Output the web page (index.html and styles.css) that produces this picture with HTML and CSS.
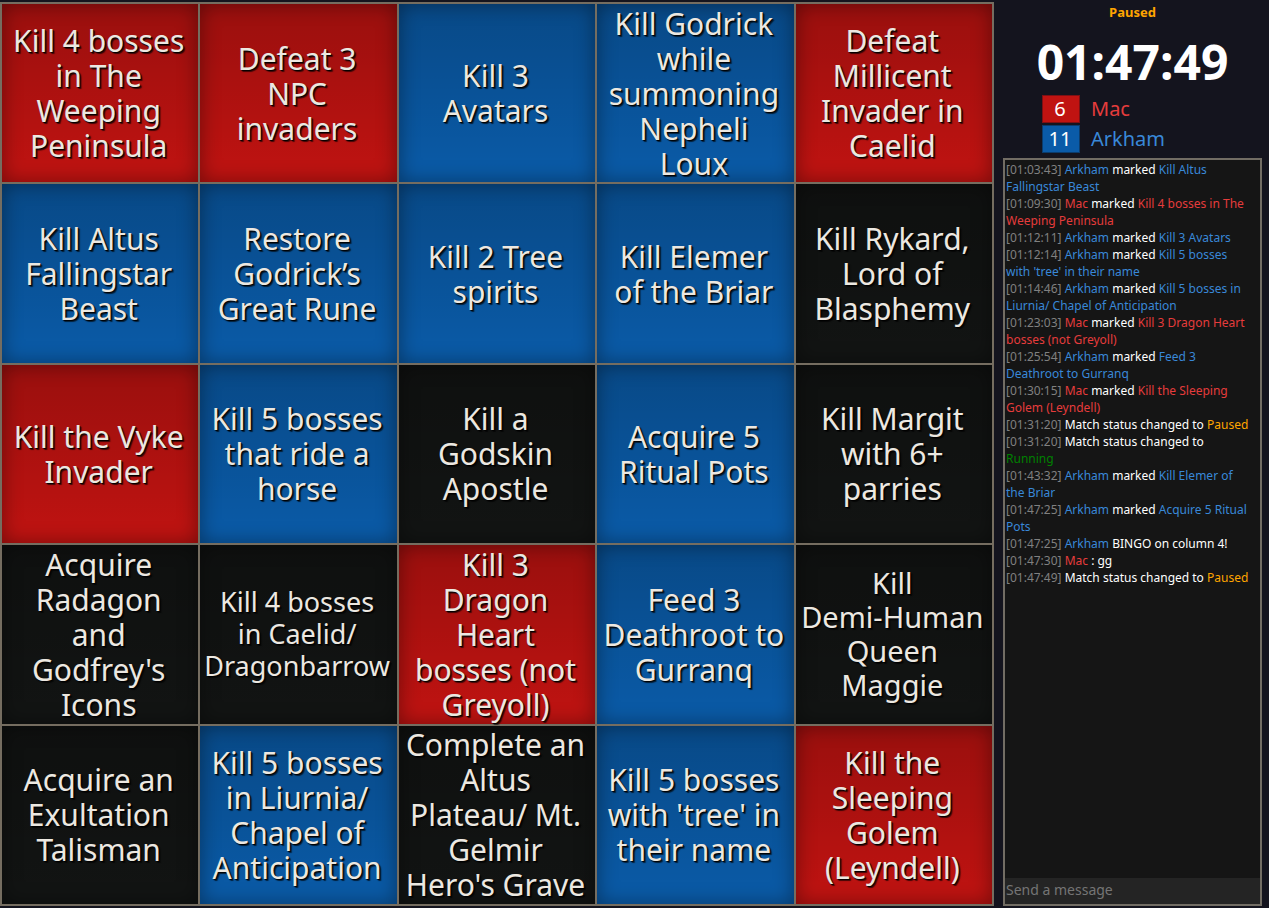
FILE: index.html
```html
<!DOCTYPE html>
<html lang="en">
<head>
<meta charset="utf-8">
<title>Bingo match</title>
<link rel="stylesheet" href="styles.css">
</head>
<body>
<main class="board">
  <button class="cell red">Kill 4 bosses<br>in The<br>Weeping<br>Peninsula</button>
  <button class="cell red">Defeat 3<br>NPC<br>invaders</button>
  <button class="cell blue">Kill 3<br>Avatars</button>
  <button class="cell blue">Kill Godrick<br>while<br>summoning<br>Nepheli<br>Loux</button>
  <button class="cell red">Defeat<br>Millicent<br>Invader in<br>Caelid</button>

  <button class="cell blue">Kill Altus<br>Fallingstar<br>Beast</button>
  <button class="cell blue">Restore<br>Godrick’s<br>Great Rune</button>
  <button class="cell blue">Kill 2 Tree<br>spirits</button>
  <button class="cell blue">Kill Elemer<br>of the Briar</button>
  <button class="cell">Kill Rykard,<br>Lord of<br>Blasphemy</button>

  <button class="cell red">Kill the Vyke<br>Invader</button>
  <button class="cell blue">Kill 5 bosses<br>that ride a<br>horse</button>
  <button class="cell">Kill a<br>Godskin<br>Apostle</button>
  <button class="cell blue">Acquire 5<br>Ritual Pots</button>
  <button class="cell">Kill Margit<br>with 6+<br>parries</button>

  <button class="cell">Acquire<br>Radagon<br>and<br>Godfrey's<br>Icons</button>
  <button class="cell small">Kill 4 bosses<br>in Caelid/<br>Dragonbarrow</button>
  <button class="cell red">Kill 3<br>Dragon<br>Heart<br>bosses (not<br>Greyoll)</button>
  <button class="cell blue">Feed 3<br>Deathroot to<br>Gurranq</button>
  <button class="cell medium">Kill<br>Demi-Human<br>Queen<br>Maggie</button>

  <button class="cell">Acquire an<br>Exultation<br>Talisman</button>
  <button class="cell blue">Kill 5 bosses<br>in Liurnia/<br>Chapel of<br>Anticipation</button>
  <button class="cell">Complete an<br>Altus<br>Plateau/ Mt.<br>Gelmir<br>Hero's Grave</button>
  <button class="cell blue">Kill 5 bosses<br>with 'tree' in<br>their name</button>
  <button class="cell red">Kill the<br>Sleeping<br>Golem<br>(Leyndell)</button>
</main>

<aside class="side">
  <div class="status">Paused</div>
  <div class="timer">01:47:49</div>
  <div class="teams">
    <div class="team"><span class="score score-red">6</span><span class="t-red">Mac</span></div>
    <div class="team"><span class="score score-blue">11</span><span class="t-blue">Arkham</span></div>
  </div>
  <section class="chat">
    <div class="log">
      <p><time>[01:03:43]</time> <span class="t-blue">Arkham</span> marked <span class="t-blue">Kill Altus<br>Fallingstar Beast</span></p>
      <p><time>[01:09:30]</time> <span class="t-red">Mac</span> marked <span class="t-red">Kill 4 bosses in The<br>Weeping Peninsula</span></p>
      <p><time>[01:12:11]</time> <span class="t-blue">Arkham</span> marked <span class="t-blue">Kill 3 Avatars</span></p>
      <p><time>[01:12:14]</time> <span class="t-blue">Arkham</span> marked <span class="t-blue">Kill 5 bosses<br>with 'tree' in their name</span></p>
      <p><time>[01:14:46]</time> <span class="t-blue">Arkham</span> marked <span class="t-blue">Kill 5 bosses in<br>Liurnia/ Chapel of Anticipation</span></p>
      <p><time>[01:23:03]</time> <span class="t-red">Mac</span> marked <span class="t-red">Kill 3 Dragon Heart<br>bosses (not Greyoll)</span></p>
      <p><time>[01:25:54]</time> <span class="t-blue">Arkham</span> marked <span class="t-blue">Feed 3<br>Deathroot to Gurranq</span></p>
      <p><time>[01:30:15]</time> <span class="t-red">Mac</span> marked <span class="t-red">Kill the Sleeping<br>Golem (Leyndell)</span></p>
      <p><time>[01:31:20]</time> Match status changed to <span class="t-orange">Paused</span></p>
      <p><time>[01:31:20]</time> Match status changed to<br><span class="t-green">Running</span></p>
      <p><time>[01:43:32]</time> <span class="t-blue">Arkham</span> marked <span class="t-blue">Kill Elemer of<br>the Briar</span></p>
      <p><time>[01:47:25]</time> <span class="t-blue">Arkham</span> marked <span class="t-blue">Acquire 5 Ritual<br>Pots</span></p>
      <p><time>[01:47:25]</time> <span class="t-blue">Arkham</span> BINGO on column 4!</p>
      <p><time>[01:47:30]</time> <span class="t-red">Mac</span> : gg</p>
      <p><time>[01:47:49]</time> Match status changed to <span class="t-orange">Paused</span></p>
    </div>
    <input class="message" type="text" placeholder="Send a message" aria-label="Send a message">
  </section>
</aside>
</body>
</html>
```

FILE: styles.css
```css
* { box-sizing: border-box; }

body {
  margin: 0;
  min-height: 100vh;
  display: flex;
  gap: 9px;
  padding: 2px 7px 2px 0;
  background: #14141e;
  color: #fff;
  font-family: "Noto Sans", "Open Sans", sans-serif;
}

.board {
  flex: 1;
  display: grid;
  grid-template-columns: repeat(5, minmax(0, 1fr));
  grid-auto-rows: minmax(0, 1fr);
  gap: 2px;
  padding: 2px;
  background: #756d60;
}

.cell {
  border: 0;
  padding: 0 3px 0 0;
  font: 30px/35px "Noto Sans", "Open Sans", sans-serif;
  color: #ece8e1;
  text-shadow: 1px 1px 1px #000, 2px 2px 1px rgba(0, 0, 0, 0.6);
  background: linear-gradient(rgba(0, 0, 0, 0.2), rgba(0, 0, 0, 0)) #121413;
  box-shadow: inset 0 0 20px rgba(0, 0, 0, 0.4);
}

.red { background-color: #c01311; }
.blue { background-color: #0a5ba8; }
.small { font-size: 27px; line-height: 32px; }
.medium { font-size: 29px; line-height: 34px; }

.side {
  width: 259px;
  display: flex;
  flex-direction: column;
}

.status {
  font-size: 13px;
  font-weight: 700;
  line-height: 20px;
  text-align: center;
  color: #ffa500;
}

.timer {
  font-size: 48px;
  font-weight: 700;
  line-height: 64px;
  margin-top: 8px;
  text-align: center;
}

.teams {
  display: grid;
  gap: 2px;
  padding: 1px 0 5px 39px;
  font: 20px/28px "Noto Sans", "Open Sans", sans-serif;
}

.team {
  display: flex;
  gap: 11px;
}

.score {
  width: 38px;
  padding-right: 2px;
  line-height: 26px;
  border: 1px solid;
  text-align: center;
  color: #fff;
}

.score-red { background: #c01311; border-color: #7d1014; }
.score-blue { background: #0a5ba8; border-color: #0b3c6c; }

.chat {
  flex: 1;
  display: flex;
  flex-direction: column;
  border: 2px solid #726d64;
  background: #151515;
}

.log {
  flex: 1;
  padding: 1px 0 0 1px;
  font-size: 12px;
  line-height: 17px;
  white-space: nowrap;
}

.log p { margin: 0; }
.log time { color: #808080; }

.t-red { color: #e53c3c; }
.t-blue { color: #3988d8; }
.t-orange { color: #ffa500; }
.t-green { color: #008000; }

.message {
  width: 100%;
  height: 26px;
  border: 0;
  padding: 0 1px 3px;
  background: #242424;
  color: #fff;
  font: 14px "Noto Sans", "Open Sans", sans-serif;
}

.message::placeholder { color: #757575; }
```
